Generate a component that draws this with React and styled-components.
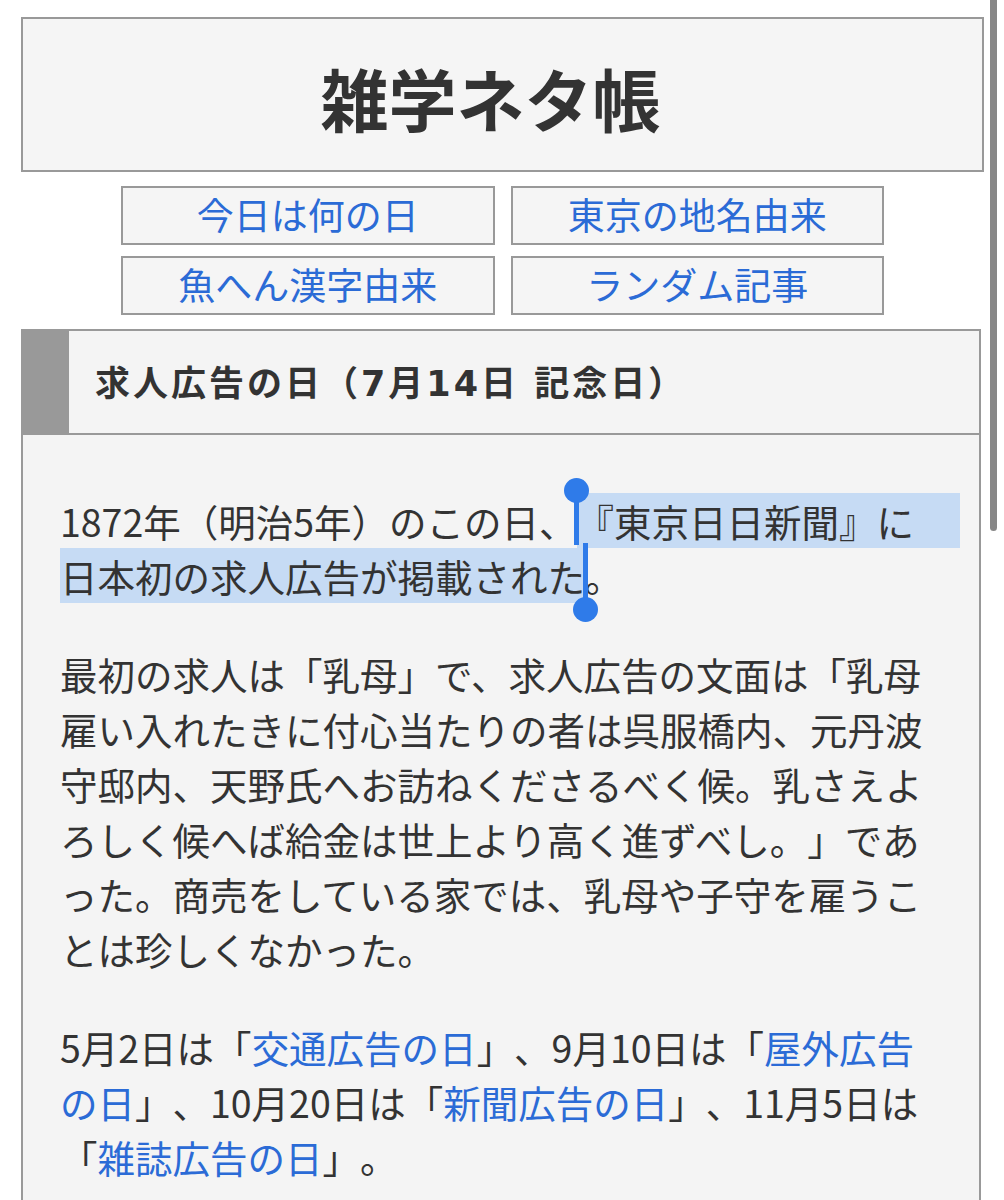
import React from 'react';
import styled, { createGlobalStyle } from 'styled-components';

const GlobalStyle = createGlobalStyle`
  html, body {
    margin: 0;
    padding: 0;
    background: #fff;
  }
  body {
    font-family: "Noto Sans CJK JP", "Noto Sans", sans-serif;
    color: #333;
    text-spacing-trim: space-all;
  }
`;

const Page = styled.div`
  padding: 17px 0 0 21px;
  width: 963px;
`;

const SiteHeader = styled.header`
  box-sizing: border-box;
  height: 155px;
  border: 2px solid #999;
  background: #f5f5f5;
  display: flex;
  align-items: center;
  justify-content: center;
  padding: 6px 24px 0 0;
`;

const Title = styled.h1`
  margin: 0;
  font-size: 68px;
  font-weight: 700;
  color: #333;
`;

const Nav = styled.nav`
  width: 763px;
  margin: 14px auto 0;
  display: grid;
  grid-template-columns: 1fr 1fr;
  column-gap: 16px;
  row-gap: 11px;
`;

const NavButton = styled.a`
  box-sizing: border-box;
  height: 59px;
  border: 2px solid #999;
  background: #f5f5f5;
  display: flex;
  align-items: center;
  justify-content: center;
  font-size: 37px;
  color: #2b6bd6;
  text-decoration: none;
  padding-bottom: 3px;
`;

const Article = styled.section`
  box-sizing: border-box;
  width: 960px;
  margin-top: 14px;
  border: 2px solid #999;
  border-bottom: none;
  background: #f4f4f4;
`;

const ArticleHead = styled.h2`
  margin: 0;
  height: 104px;
  box-sizing: border-box;
  border-left: 46px solid #999;
  border-bottom: 2px solid #999;
  padding: 0 0 4px 26px;
  display: flex;
  align-items: center;
  font-family: "DejaVu Sans", "Noto Sans CJK JP", sans-serif;
  font-size: 35px;
  font-weight: 700;
  letter-spacing: 3px;
  color: #333;
`;

const ArticleBody = styled.div`
  padding: 20px 47px 60px 37px;
`;

const Para = styled.p`
  width: 872px;
  margin: 38px 0 43px;
  font-size: 37.5px;
  line-height: 55px;
  color: #333;
  line-break: normal;
  text-spacing-trim: space-all;
`;

const Link = styled.a`
  color: #2b6bd6;
  text-decoration: none;
`;

const Selected = styled.span`
  background: #c6dbf4;
  box-shadow: ${(p) => (p.$tail ? `${p.$tail}px 0 0 #c6dbf4` : 'none')};
`;

const Caret = styled.span`
  position: relative;
  display: inline-block;
  width: 0;
  height: 0;
`;

const Stem = styled.span`
  position: absolute;
  left: -2.5px;
  width: 5px;
  top: ${(p) => p.$top}px;
  height: ${(p) => p.$height}px;
  background: #2f7be9;
`;

const Knob = styled.span`
  position: absolute;
  left: -12.5px;
  width: 25px;
  height: 25px;
  border-radius: 50%;
  top: ${(p) => p.$center - 12.5}px;
  background: #2f7be9;
`;

const ScrollThumb = styled.div`
  position: fixed;
  top: 0;
  right: 7px;
  width: 7px;
  height: 531px;
  background: #878787;
  border-radius: 0 0 4px 4px;
`;

const navItems = ['今日は何の日', '東京の地名由来', '魚へん漢字由来', 'ランダム記事'];

export default function App() {
  return (
    <>
      <GlobalStyle />
      <Page>
        <SiteHeader>
          <Title>雑学ネタ帳</Title>
        </SiteHeader>
        <Nav>
          {navItems.map((item) => (
            <NavButton key={item} href="#">
              {item}
            </NavButton>
          ))}
        </Nav>
        <Article>
          <ArticleHead>求人広告の日（7月14日 記念日）</ArticleHead>
          <ArticleBody>
            <Para>
              1872年（明治5年）のこの日、
              <Caret>
                <Stem $top={-47} $height={55} />
                <Knob $center={-47} />
              </Caret>
              <Selected $tail={46}>『東京日日新聞』に</Selected>
              <br />
              <Selected>日本初の求人広告が掲載された</Selected>
              <Caret>
                <Stem $top={-49} $height={66} />
                <Knob $center={17} />
              </Caret>
              。
            </Para>
            <Para>
              最初の求人は「乳母」で、求人広告の文面は「乳母雇い入れたきに付心当たりの者は呉服橋内、元丹波守邸内、天野氏へお訪ねくださるべく候。乳さえよろしく候へば給金は世上より高く進ずべし。」であった。商売をしている家では、乳母や子守を雇うことは珍しくなかった。
            </Para>
            <Para>
              5月2日は「<Link href="#">交通広告の日</Link>」、9月10日は「
              <Link href="#">屋外広告の日</Link>」、10月20日は「
              <Link href="#">新聞広告の日</Link>」、11月5日は「
              <Link href="#">雑誌広告の日</Link>」。
            </Para>
          </ArticleBody>
        </Article>
      </Page>
      <ScrollThumb />
    </>
  );
}
